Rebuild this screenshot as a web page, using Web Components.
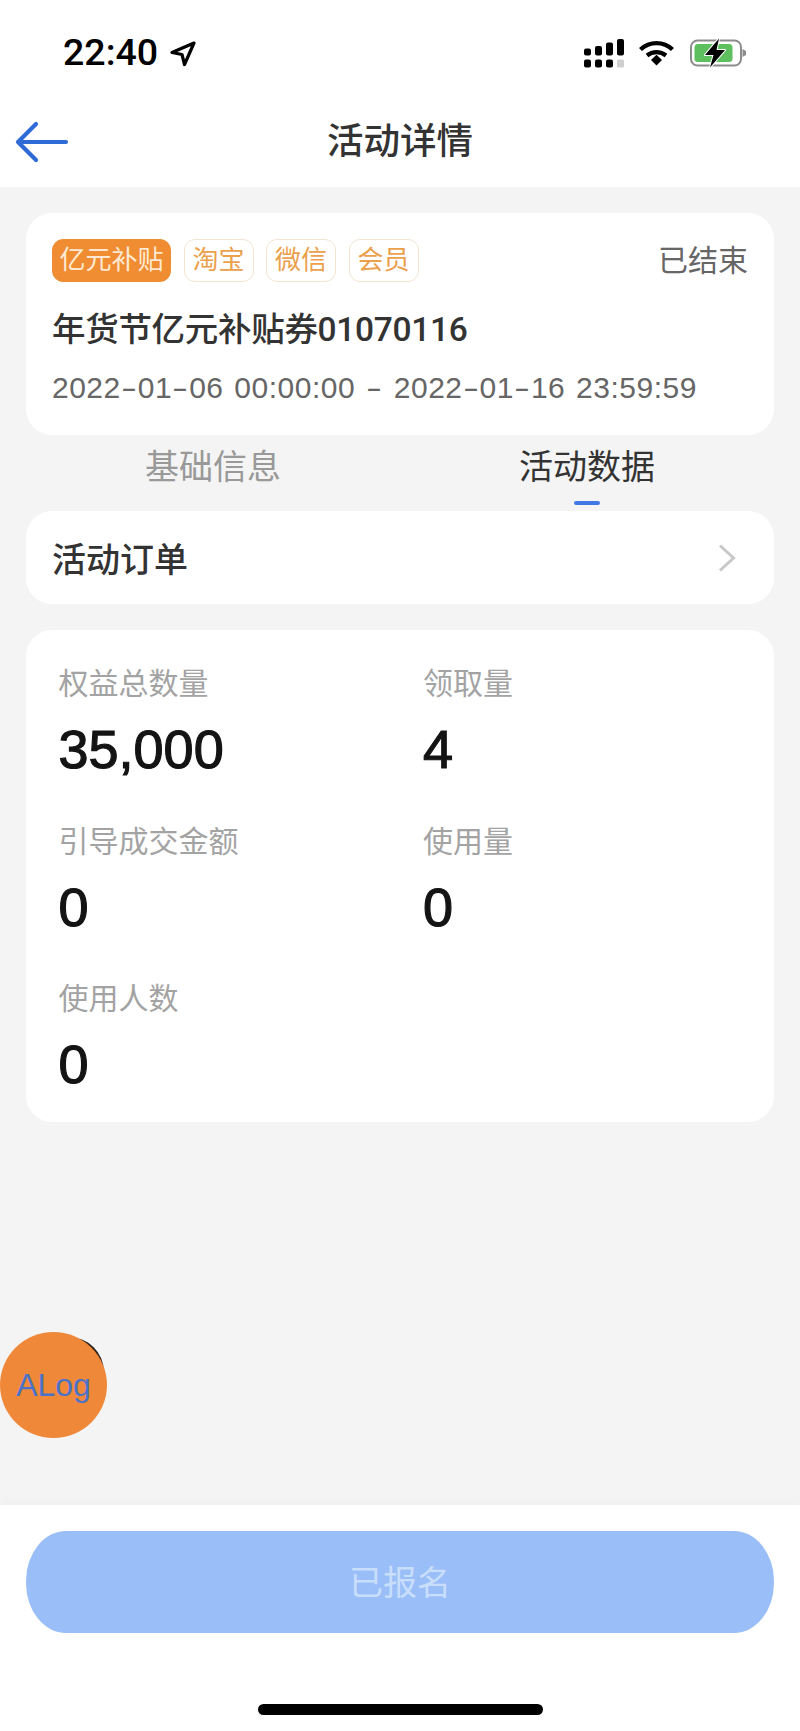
<!DOCTYPE html>
<html lang="zh-CN">
<head>
<meta charset="utf-8">
<title>活动详情</title>
<style>
    html, body { margin: 0; height: 100%; }
    body {
        position: relative;
        display: flex;
        flex-direction: column;
        height: 1731px;
        background: #f4f4f4;
        font-family: "Liberation Sans", "Noto Sans CJK SC", sans-serif;
        overflow: hidden;
    }
    page-content { flex: 1; }
</style>
</head>
<body>
<status-bar time="22:40"></status-bar>
<nav-bar heading="活动详情"></nav-bar>
<page-content>
    <activity-card heading="年货节亿元补贴券01070116" state="已结束" period="2022-01-06 00:00:00 - 2022-01-16 23:59:59">
        <tag-chip filled>亿元补贴</tag-chip>
        <tag-chip>淘宝</tag-chip>
        <tag-chip>微信</tag-chip>
        <tag-chip>会员</tag-chip>
    </activity-card>
    <tab-bar first="基础信息" second="活动数据"></tab-bar>
    <link-row>活动订单</link-row>
    <stat-card>
        <stat-item label="权益总数量" value="35,000"></stat-item>
        <stat-item label="领取量" value="4"></stat-item>
        <stat-item label="引导成交金额" value="0"></stat-item>
        <stat-item label="使用量" value="0"></stat-item>
        <stat-item label="使用人数" value="0"></stat-item>
    </stat-card>
</page-content>
<bottom-bar>已报名</bottom-bar>
<alog-bubble></alog-bubble>

<script>
customElements.define(
    'status-bar',
    class extends HTMLElement {
        constructor() {
            super()
            this.attachShadow({ mode: 'open' })
        }
        connectedCallback() {
            this.shadowRoot.innerHTML = `
                <style>
                    :host {
                        display: flex;
                        align-items: center;
                        height: 96px;
                        padding: 10px 54px 0 63px;
                        box-sizing: border-box;
                        background: #fff;
                        color: #000;
                    }
                    .time {
                        font: 500 37.5px/1 Roboto, "Liberation Sans", sans-serif;
                        margin-right: 11px;
                    }
                    .icons { display: flex; align-items: center; margin-left: auto; }
                    svg { display: block; }
                </style>
                <span class="time">${this.getAttribute('time')}</span>
                <svg width="28" height="27" viewBox="0 0 28 27" fill="none">
                    <path d="M25 3 L3 12.5 L13 14.5 L15.5 24.5 Z" stroke="#000" stroke-width="3.2" stroke-linejoin="round"/>
                </svg>
                <div class="icons">
                    <svg width="41" height="29" viewBox="0 0 41 29" style="margin-right:14px">
                        <g fill="#000">
                            <rect x="0" y="9.5" width="7" height="7" rx="2"/>
                            <rect x="11" y="7" width="7" height="9.5" rx="2"/>
                            <rect x="22" y="3.5" width="7" height="13" rx="2"/>
                            <rect x="33" y="0" width="7" height="16.5" rx="2"/>
                            <rect x="0" y="20.5" width="7" height="8" rx="2"/>
                            <rect x="11" y="20.5" width="7" height="8" rx="2"/>
                            <rect x="22" y="20.5" width="7" height="8" rx="2"/>
                        </g>
                        <rect x="33" y="20.5" width="7" height="8" rx="1.5" fill="#cfcfcf"/>
                    </svg>
                    <svg width="35" height="26" viewBox="0 0 35 26" fill="none" style="margin-right:16px">
                        <path d="M1.5 9.5 C10.5 1 24.5 1 33.5 9.5" stroke="#000" stroke-width="4.4"/>
                        <path d="M8 15.5 C13.5 11 21.5 11 27 15.5" stroke="#000" stroke-width="4.2"/>
                        <path d="M12 20 L17.5 14.8 L23 20 L17.5 25.5 Z" fill="#000"/>
                    </svg>
                    <svg width="56" height="30" viewBox="0 0 56 30">
                        <rect x="1" y="2.5" width="50" height="25" rx="6.5" fill="none" stroke="#8c8c8c" stroke-width="2"/>
                        <rect x="4.5" y="6" width="38" height="18" rx="3.5" fill="#5dbf5e"/>
                        <path d="M52.5 11 L56 13 V17 L52.5 19 Z" fill="#8c8c8c"/>
                        <path d="M29 0.5 L15 17 H23.5 L20 29.5 L35 12 H26.5 Z" fill="#000" stroke="#fff" stroke-width="2" stroke-linejoin="round" paint-order="stroke"/>
                    </svg>
                </div>
            `
        }
    }
)

customElements.define(
    'nav-bar',
    class extends HTMLElement {
        constructor() {
            super()
            this.attachShadow({ mode: 'open' })
        }
        connectedCallback() {
            this.shadowRoot.innerHTML = `
                <style>
                    :host {
                        display: grid;
                        grid-template-columns: 1fr auto 1fr;
                        align-items: center;
                        height: 91px;
                        padding-left: 15px;
                        background: #fff;
                    }
                    svg { display: block; }
                    h1 {
                        margin: 0 0 6px -15px;
                        font-size: 36.5px;
                        font-weight: 500;
                        color: #333;
                    }
                </style>
                <svg width="56" height="42" viewBox="0 0 56 42" fill="none">
                    <path d="M21 3 L3 21 L21 39 M3 21 H51" stroke="#2f6bd6" stroke-width="4.2" stroke-linecap="round" stroke-linejoin="round"/>
                </svg>
                <h1>${this.getAttribute('heading')}</h1>
            `
        }
    }
)

customElements.define(
    'tag-chip',
    class extends HTMLElement {
        constructor() {
            super()
            this.attachShadow({ mode: 'open' })
        }
        connectedCallback() {
            this.shadowRoot.innerHTML = `
                <style>
                    :host {
                        display: block;
                        height: 43px;
                        padding: 0 8px;
                        box-sizing: border-box;
                        border: 1px solid #f3e4d2;
                        border-radius: 11px;
                        font-size: 26px;
                        line-height: 40px;
                        color: #eba04c;
                    }
                    :host([filled]) {
                        padding: 0 6.5px;
                        background: #f08d32;
                        border-color: #f08d32;
                        color: #fde9d3;
                    }
                </style>
                <slot></slot>
            `
        }
    }
)

customElements.define(
    'activity-card',
    class extends HTMLElement {
        constructor() {
            super()
            this.attachShadow({ mode: 'open' })
        }
        connectedCallback() {
            // the dashes of the period are wider in the reference than in Liberation Sans
            const period = this.getAttribute('period').replace(/-/g, '<span class="dash">-</span>')
            this.shadowRoot.innerHTML = `
                <style>
                    :host {
                        display: block;
                        margin: 26px 26px 0;
                        padding: 26px 26px 27px;
                        background: #fff;
                        border-radius: 26px;
                    }
                    .top { display: flex; align-items: center; gap: 12.5px; height: 43px; }
                    .state { margin-left: auto; font-size: 30px; line-height: 1; color: #666; }
                    h2 {
                        margin: 26px 0 0;
                        font: 500 33.5px/44px Roboto, "Noto Sans CJK SC", sans-serif;
                        letter-spacing: -0.3px;
                        color: #333;
                    }
                    p {
                        margin: 16px 0 0;
                        font-size: 30px;
                        line-height: 40px;
                        letter-spacing: 0.5px;
                        word-spacing: 2px;
                        color: #666;
                        white-space: nowrap;
                    }
                    .dash {
                        display: inline-block;
                        width: 17px;
                        text-align: center;
                        transform: scaleX(1.6);
                    }
                </style>
                <div class="top">
                    <slot></slot>
                    <span class="state">${this.getAttribute('state')}</span>
                </div>
                <h2>${this.getAttribute('heading')}</h2>
                <p>${period}</p>
            `
        }
    }
)

customElements.define(
    'tab-bar',
    class extends HTMLElement {
        constructor() {
            super()
            this.attachShadow({ mode: 'open' })
        }
        connectedCallback() {
            this.shadowRoot.innerHTML = `
                <style>
                    :host {
                        display: grid;
                        grid-template-columns: 1fr 1fr;
                        height: 76px;
                        margin: 0 26px;
                        font-size: 34px;
                        color: #999;
                    }
                    .tab {
                        display: flex;
                        flex-direction: column;
                        align-items: center;
                        padding-top: 8px;
                        line-height: 48px;
                    }
                    .on { color: #333; }
                    .on::after {
                        content: "";
                        width: 26px;
                        height: 4px;
                        margin-top: 10px;
                        border-radius: 2px;
                        background: #4079e6;
                    }
                </style>
                <div class="tab">${this.getAttribute('first')}</div>
                <div class="tab on">${this.getAttribute('second')}</div>
            `
        }
    }
)

customElements.define(
    'link-row',
    class extends HTMLElement {
        constructor() {
            super()
            this.attachShadow({ mode: 'open' })
        }
        connectedCallback() {
            this.shadowRoot.innerHTML = `
                <style>
                    :host {
                        display: flex;
                        align-items: center;
                        justify-content: space-between;
                        height: 93px;
                        margin: 0 26px;
                        padding: 0 38px 0 26px;
                        background: #fff;
                        border-radius: 26px;
                        font-size: 34px;
                        font-weight: 500;
                        color: #333;
                    }
                    svg { display: block; }
                </style>
                <slot></slot>
                <svg width="18" height="28" viewBox="0 0 18 28" fill="none">
                    <path d="M2 1.5 L15.5 14 L2 26.5" stroke="#c8c8c8" stroke-width="3"/>
                </svg>
            `
        }
    }
)

customElements.define(
    'stat-card',
    class extends HTMLElement {
        constructor() {
            super()
            this.attachShadow({ mode: 'open' })
        }
        connectedCallback() {
            this.shadowRoot.innerHTML = `
                <style>
                    :host {
                        display: grid;
                        grid-template-columns: 364.5px 1fr;
                        row-gap: 37.5px;
                        margin: 26px 26px 0;
                        padding: 34px 32.5px 23px;
                        background: #fff;
                        border-radius: 26px;
                    }
                </style>
                <slot></slot>
            `
        }
    }
)

customElements.define(
    'stat-item',
    class extends HTMLElement {
        constructor() {
            super()
            this.attachShadow({ mode: 'open' })
        }
        connectedCallback() {
            this.shadowRoot.innerHTML = `
                <style>
                    :host { display: block; }
                    .label { font-size: 30px; line-height: 40px; color: #a3a3a3; }
                    .value {
                        margin-top: 10px;
                        font: 400 54px/70px "Liberation Sans", sans-serif;
                        -webkit-text-stroke: 1.2px #141414;
                        color: #141414;
                    }
                </style>
                <div class="label">${this.getAttribute('label')}</div>
                <div class="value">${this.getAttribute('value')}</div>
            `
        }
    }
)

customElements.define(
    'bottom-bar',
    class extends HTMLElement {
        constructor() {
            super()
            this.attachShadow({ mode: 'open' })
        }
        connectedCallback() {
            this.shadowRoot.innerHTML = `
                <style>
                    :host {
                        display: flex;
                        flex-direction: column;
                        align-items: center;
                        height: 226px;
                        padding: 26px 26px 0;
                        box-sizing: border-box;
                        background: #fff;
                        box-shadow: 0 -3px 8px rgba(0, 0, 0, .025);
                    }
                    .btn {
                        display: flex;
                        align-items: center;
                        justify-content: center;
                        width: 100%;
                        height: 102px;
                        padding-bottom: 4px;
                        box-sizing: border-box;
                        border-radius: 40px / 50px;
                        background: #9abef8;
                        font-size: 34px;
                        color: #c8defb;
                    }
                    .home {
                        width: 285px;
                        height: 11px;
                        margin-top: 71px;
                        border-radius: 6px;
                        background: #000;
                    }
                </style>
                <div class="btn"><slot></slot></div>
                <div class="home"></div>
            `
        }
    }
)

customElements.define(
    'alog-bubble',
    class extends HTMLElement {
        constructor() {
            super()
            this.attachShadow({ mode: 'open' })
        }
        connectedCallback() {
            this.shadowRoot.innerHTML = `
                <style>
                    :host {
                        position: absolute;
                        left: 0;
                        top: 1332px;
                        width: 107px;
                        height: 106px;
                    }
                    .shade, .disc {
                        position: absolute;
                        border-radius: 50%;
                    }
                    .shade {
                        inset: 18.7px;
                        background: #2e2219;
                        transform: translate(15.8px, -13.8px);
                    }
                    .disc {
                        inset: 0;
                        display: flex;
                        align-items: center;
                        justify-content: center;
                        background: #f0883a;
                        font: 32px "Liberation Sans", sans-serif;
                        color: #4a72c8;
                    }
                </style>
                <div class="shade"></div>
                <div class="disc">ALog</div>
            `
        }
    }
)
</script>
</body>
</html>
